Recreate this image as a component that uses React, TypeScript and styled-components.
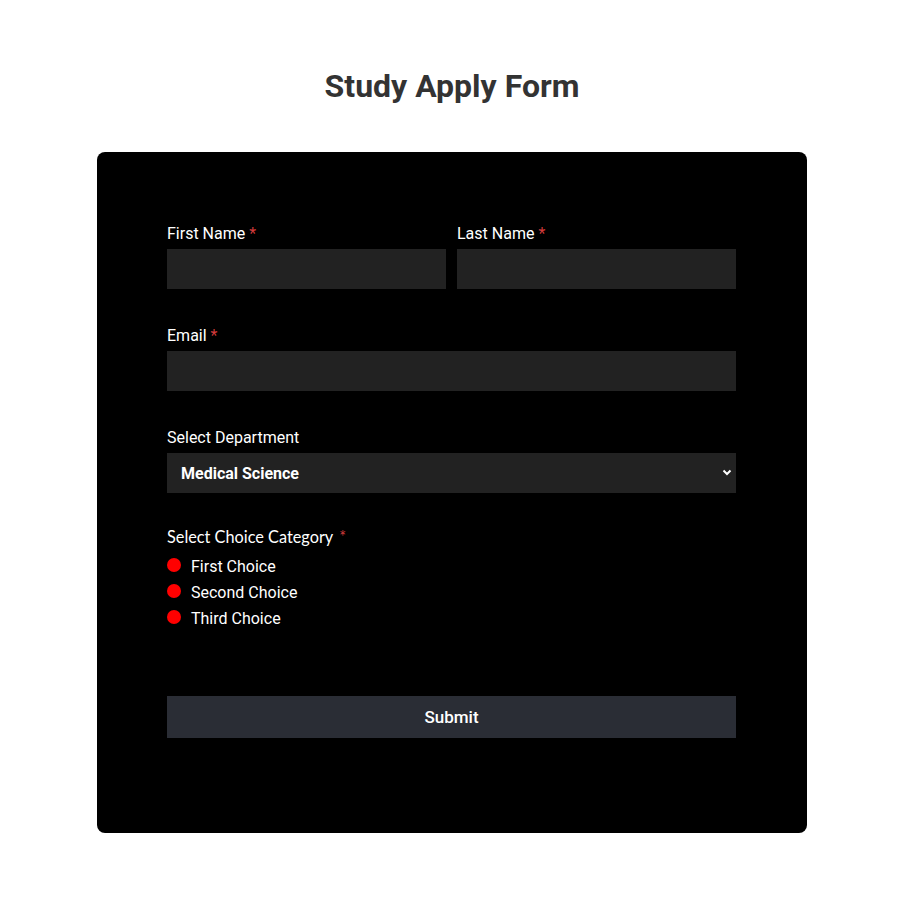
import React from "react";
import styled, { createGlobalStyle } from "styled-components";

const GlobalStyle = createGlobalStyle`
  body {
    margin: 0;
    background: #ffffff;
    font-family: Roboto, "Liberation Sans", sans-serif;
  }
`;

const Page = styled.div`
  width: 904px;
  display: flex;
  flex-direction: column;
  align-items: center;
  padding-top: 68px;
`;

const Title = styled.h1`
  margin: 0 0 48px;
  font-size: 32px;
  line-height: 36px;
  font-weight: 700;
  color: #333333;
`;

const Card = styled.form`
  width: 710px;
  box-sizing: border-box;
  background: #000000;
  border-radius: 8px;
  padding: 72px 71px 95px 70px;
  display: flex;
  flex-direction: column;
`;

const Row = styled.div`
  display: grid;
  grid-template-columns: 1fr 1fr;
  gap: 11px;
  margin-bottom: 37px;
`;

const Field = styled.div<{ $gap?: number }>`
  display: flex;
  flex-direction: column;
  margin-bottom: ${(p) => p.$gap ?? 0}px;
`;

const Label = styled.label<{ $alt?: boolean }>`
  font-family: ${(p) => (p.$alt ? "Lato, sans-serif" : "Roboto, sans-serif")};
  font-size: ${(p) => (p.$alt ? "16.3px" : "16px")};
  line-height: 20px;
  color: #ffffff;
  margin-bottom: ${(p) => (p.$alt ? "6px" : "5px")};
`;

const Req = styled.span<{ $wide?: boolean }>`
  color: #d23b3b;
  margin-left: ${(p) => (p.$wide ? "6px" : "4px")};
`;

const Input = styled.input`
  height: 40px;
  box-sizing: border-box;
  border: none;
  outline: none;
  background: #222222;
  color: #ffffff;
  padding: 0 14px;
  font-family: Roboto, sans-serif;
  font-size: 16px;
`;

const SelectWrap = styled.div`
  position: relative;
  height: 40px;
`;

const Select = styled.select`
  width: 100%;
  height: 40px;
  appearance: none;
  border: none;
  outline: none;
  background: #222222;
  color: #ffffff;
  padding: 0 14px;
  font-family: Roboto, sans-serif;
  font-size: 16px;
  font-weight: 700;
`;

const Chevron = styled.svg`
  position: absolute;
  right: 4px;
  top: 16px;
  pointer-events: none;
`;

const Choices = styled.div`
  display: flex;
  flex-direction: column;
`;

const Choice = styled.label`
  display: flex;
  align-items: center;
  gap: 10px;
  height: 26px;
  font-family: Roboto, sans-serif;
  font-size: 16px;
  color: #ffffff;
`;

const Dot = styled.span`
  width: 14px;
  height: 14px;
  border-radius: 50%;
  background: #ff0000;
  flex-shrink: 0;
  margin-top: -2px;
`;

const Submit = styled.button`
  margin-top: 65px;
  height: 42px;
  border: none;
  background: #2a2d35;
  color: #ffffff;
  font-family: Roboto, sans-serif;
  font-size: 17px;
  font-weight: 500;
`;

const choices = ["First Choice", "Second Choice", "Third Choice"];

export default function App() {
  return (
    <>
      <GlobalStyle />
      <Page>
        <Title>Study Apply Form</Title>
        <Card onSubmit={(e) => e.preventDefault()}>
          <Row>
            <Field>
              <Label>
                First Name<Req>*</Req>
              </Label>
              <Input />
            </Field>
            <Field>
              <Label>
                Last Name<Req>*</Req>
              </Label>
              <Input />
            </Field>
          </Row>
          <Field $gap={37}>
            <Label>
              Email<Req>*</Req>
            </Label>
            <Input />
          </Field>
          <Field $gap={34}>
            <Label>Select Department</Label>
            <SelectWrap>
              <Select defaultValue="Medical Science">
                <option>Medical Science</option>
                <option>Engineering</option>
                <option>Business</option>
              </Select>
              <Chevron width="10" height="7" viewBox="0 0 10 7">
                <path d="M1.5 1.5 L5 5 L8.5 1.5" fill="none" stroke="#fff" strokeWidth="2" />
              </Chevron>
            </SelectWrap>
          </Field>
          <Field>
            <Label $alt>
              Select Choice Category<Req $wide>*</Req>
            </Label>
            <Choices>
              {choices.map((c) => (
                <Choice key={c}>
                  <Dot />
                  {c}
                </Choice>
              ))}
            </Choices>
          </Field>
          <Submit type="submit">Submit</Submit>
        </Card>
      </Page>
    </>
  );
}
